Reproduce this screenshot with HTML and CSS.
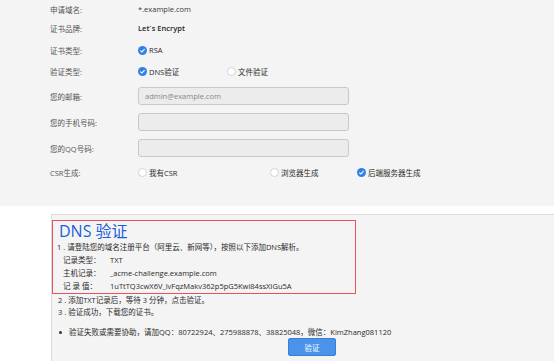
FILE: index.html
```html
<!DOCTYPE html>
<html lang="zh-CN">
<head>
    <meta charset="UTF-8">
    <meta name="viewport" content="width=device-width, initial-scale=1.0">
    <title>申请证书</title>
    <link rel="stylesheet" href="styles.css">
</head>
<body>
    <div class="form-area">
        <div class="form-grid">
            <div class="label">申请域名:</div>
            <div class="value">*.example.com</div>

            <div class="label">证书品牌:</div>
            <div class="value brand">Let`s Encrypt</div>

            <div class="label">证书类型:</div>
            <div class="value">
                <label class="opt"><span class="radio checked"><svg viewBox="0 0 10 10" width="9" height="9"><circle cx="5" cy="5" r="5" fill="#3181e6"/><path d="M2.6 5.1 L4.3 6.7 L7.3 3.4" fill="none" stroke="#fff" stroke-width="1.3"/></svg></span>RSA</label>
            </div>

            <div class="label">验证类型:</div>
            <div class="value">
                <label class="opt opt-dns"><span class="radio checked"><svg viewBox="0 0 10 10" width="9" height="9"><circle cx="5" cy="5" r="5" fill="#3181e6"/><path d="M2.6 5.1 L4.3 6.7 L7.3 3.4" fill="none" stroke="#fff" stroke-width="1.3"/></svg></span>DNS验证</label>
                <label class="opt"><span class="radio"></span>文件验证</label>
            </div>

            <div class="label">您的邮箱:</div>
            <div class="value"><input class="text-input" type="text" placeholder="admin@example.com"></div>

            <div class="label">您的手机号码:</div>
            <div class="value"><input class="text-input" type="text"></div>

            <div class="label">您的QQ号码:</div>
            <div class="value"><input class="text-input" type="text"></div>

            <div class="label">CSR生成:</div>
            <div class="value">
                <label class="opt opt-own"><span class="radio"></span>我有CSR</label>
                <label class="opt opt-browser"><span class="radio"></span>浏览器生成</label>
                <label class="opt"><span class="radio checked"><svg viewBox="0 0 10 10" width="9" height="9"><circle cx="5" cy="5" r="5" fill="#3181e6"/><path d="M2.6 5.1 L4.3 6.7 L7.3 3.4" fill="none" stroke="#fff" stroke-width="1.3"/></svg></span>后端服务器生成</label>
            </div>
        </div>
    </div>

    <div class="panel">
        <div class="dns-box">
            <h2 class="dns-title">DNS 验证</h2>
            <p class="step">1 . 请登陆您的域名注册平台（阿里云、新网等），按照以下添加DNS解析。</p>
            <div class="record"><span class="record-label">记录类型：</span>TXT</div>
            <div class="record"><span class="record-label">主机记录：</span>_acme-challenge.example.com</div>
            <div class="record"><span class="record-label">记 录 值：</span>1uTtTQ3cwX6V_lvFqzMakv362p5pG5Kwi84ssXIGu5A</div>
        </div>
        <p class="step step-out">2 . 添加TXT记录后，等待 3 分钟，点击验证。</p>
        <p class="step step-out step-last">3 . 验证成功，下载您的证书。</p>
        <ul class="help">
            <li>验证失败或需要协助，请加QQ：80722924、275988878、38825048，微信：KimZhang081120</li>
        </ul>
        <button class="btn-verify">验证</button>
    </div>
</body>
</html>
```

FILE: styles.css
```css
body {
    margin: 0;
    font-family: "Open Sans", "Noto Sans CJK SC", sans-serif;
    font-size: 7.5px;
    color: #2a2a2a;
    background-color: #fff;
}
.form-area {
    height: 206px;
    background-color: #f4f4f4;
}
.form-grid {
    display: grid;
    grid-template-columns: 88px 1fr;
    grid-template-rows: 18px 20px 24px 18px 32px 20px 32px 16px;
    align-items: center;
    padding-left: 50px;
}
.label {
    color: #555;
}
.value {
    display: flex;
    align-items: center;
    color: #3a3a3a;
}
.brand {
    color: #1e1e1e;
    font-weight: 600;
}
.opt {
    display: flex;
    align-items: center;
    color: #2a2a2a;
}
.opt-dns {
    width: 89px;
}
.opt-own {
    width: 132px;
}
.opt-browser {
    width: 87px;
}
.radio {
    display: inline-block;
    width: 9px;
    height: 9px;
    margin-right: 2px;
    border-radius: 50%;
    border: 1px solid #d4d4d4;
    background-color: #fff;
    box-sizing: border-box;
}
.radio.checked {
    border: none;
    background: none;
}
.radio svg {
    display: block;
}
.text-input {
    width: 211px;
    height: 18px;
    box-sizing: border-box;
    padding: 0 6px;
    border: 1px solid #c9c9c9;
    border-radius: 3px;
    background-color: #ececec;
    font-family: inherit;
    font-size: 7.5px;
    color: #555;
}
.text-input::placeholder {
    color: #888;
}
.panel {
    margin: 8px 0 0 51px;
    padding-top: 5px;
    min-height: 150px;
    border-top: 1px solid #dcdcdc;
    border-left: 1px solid #dcdcdc;
    background-color: #f4f4f4;
}
.dns-box {
    width: 304px;
    box-sizing: border-box;
    padding: 1px 0 0 4px;
    border: 1px solid #e8525c;
}
.dns-title {
    margin: 0;
    padding-left: 2px;
    font-size: 16px;
    font-weight: normal;
    line-height: 19px;
    color: #1b5fd4;
}
.step {
    margin: 0;
    line-height: 13px;
}
.record {
    padding-left: 6px;
    line-height: 13px;
}
.record-label {
    display: inline-block;
    width: 47px;
}
.step-out {
    margin-left: 6px;
    line-height: 12px;
}
.step-last {
    margin-bottom: 9px;
}
.help {
    margin: 0;
    padding: 0 0 0 7px;
    list-style: none;
}
.help li {
    display: flex;
    align-items: center;
    line-height: 11px;
}
.help li::before {
    content: "";
    width: 3px;
    height: 3px;
    margin-right: 7px;
    border-radius: 50%;
    background-color: #333;
}
.btn-verify {
    display: block;
    width: 48px;
    height: 18px;
    margin-left: 236px;
    padding: 0;
    border: 1px solid #3a7fd6;
    border-radius: 2px;
    background-color: #4a93ea;
    font-family: inherit;
    font-size: 7.5px;
    color: #fff;
}
```
